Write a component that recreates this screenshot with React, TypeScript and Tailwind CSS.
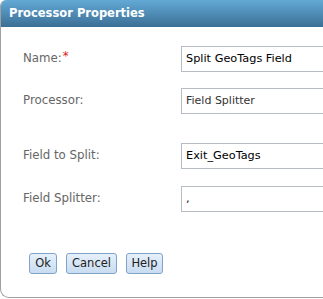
export default function App() {
  const rows = [
    { label: 'Name:', value: 'Split GeoTags Field', required: true, mt: 'mt-[19px]', small: false },
    { label: 'Processor:', value: 'Field Splitter', required: false, mt: 'mt-[16px]', small: true },
    { label: 'Field to Split:', value: 'Exit_GeoTags', required: false, mt: 'mt-[29px]', small: false },
    { label: 'Field Splitter:', value: ',', required: false, mt: 'mt-[17px]', small: false },
  ]

  const buttons = [
    { text: 'Ok', w: 'w-[28px]' },
    { text: 'Cancel', w: 'w-[51px]' },
    { text: 'Help', w: 'w-[37px]' },
  ]

  return (
    <div className="w-[323px] h-[299px] overflow-hidden bg-white font-['DejaVu_Sans',Verdana,sans-serif]">
      <div className="w-[340px] h-[298px] flex flex-col border-b border-l border-[#a0a0a0] rounded-tl-[6px] rounded-bl-[9px] overflow-hidden">
        <div className="h-[27px] flex items-center pl-[8px] bg-gradient-to-b from-[#63aad6] to-[#3b6f96] text-white font-bold text-[11.5px]">
          Processor Properties
        </div>
        <div className="flex flex-col">
          {rows.map(r => (
            <div key={r.label} className={`flex items-center h-[26px] ${r.mt}`}>
              <div className="w-[180px] pl-[22px] text-[11.8px] text-[#666]">
                {r.label}
                {r.required && <span className="text-[#e02020] ml-[1px] relative -top-[2px]">*</span>}
              </div>
              <div className="flex-1 h-[26px] border border-[#b8bcc4] flex items-center pl-[4px]">
                <span className={r.small ? 'text-[11px] text-[#333]' : 'text-[11.3px] text-black'}>{r.value}</span>
              </div>
            </div>
          ))}
        </div>
        <div className="flex gap-[9px] pl-[28px] mt-[41px]">
          {buttons.map(b => (
            <button
              key={b.text}
              className={`${b.w} h-[21px] rounded-[3px] border border-[#7fa4c8] bg-gradient-to-b from-[#e6f0fb] to-[#c8dcf1] text-[11.5px] text-[#222] leading-none`}
            >
              {b.text}
            </button>
          ))}
        </div>
      </div>
    </div>
  )
}
